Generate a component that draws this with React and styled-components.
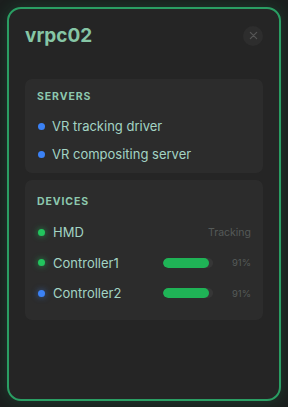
import React from 'react';
import styled, { createGlobalStyle } from 'styled-components';

const GlobalStyle = createGlobalStyle`
  html, body {
    margin: 0;
    padding: 0;
    background: #1b1f1e;
  }

  body {
    font-family: Inter, "Noto Sans", sans-serif;
    -webkit-font-smoothing: antialiased;
  }
`;

const Page = styled.div`
  padding: 7px;
`;

const Panel = styled.div`
  box-sizing: border-box;
  height: 394px;
  padding: 16px;
  background: #252525;
  border: 2px solid #2a9e63;
  border-radius: 14px;
  box-shadow: 0 0 14px rgba(42, 158, 99, 0.22);
  display: flex;
  flex-direction: column;
`;

const Header = styled.div`
  display: flex;
  align-items: center;
  justify-content: space-between;
  height: 21px;
  margin-bottom: 33px;
`;

const Title = styled.h1`
  margin: 0;
  font-size: 19px;
  font-weight: 700;
  color: #86c6a5;
  line-height: 1;
`;

const CloseButton = styled.button`
  width: 20px;
  height: 20px;
  padding: 0;
  border: none;
  border-radius: 50%;
  background: #2d2d2d;
  color: #555;
  display: flex;
  align-items: center;
  justify-content: center;
  cursor: pointer;
`;

const Card = styled.section`
  background: #2c2c2c;
  border-radius: 7px;
  padding: ${p => (p.$roomy ? '14.5px 12px 11.5px' : '10.5px 12px 5px')};
  & + & {
    margin-top: 7px;
  }
`;

const Heading = styled.h2`
  margin: 0 0 9.5px;
  font-size: 10.5px;
  font-weight: 700;
  letter-spacing: 0.9px;
  text-transform: uppercase;
  color: #8cc8ae;
  line-height: 13px;
`;

const Row = styled.div`
  display: flex;
  align-items: center;
  height: ${p => p.$h}px;
`;

const Dot = styled.span`
  width: 7px;
  height: 7px;
  border-radius: 50%;
  flex-shrink: 0;
  margin-left: 1px;
  margin-right: ${p => p.$gap}px;
  background: ${p => (p.$color === 'green' ? '#22c55e' : '#3b82f6')};
  box-shadow: ${p =>
    p.$glow
      ? p.$color === 'green'
        ? '0 0 6px rgba(34, 197, 94, 0.7)'
        : '0 0 6px rgba(59, 130, 246, 0.6)'
      : 'none'};
`;

const Name = styled.span`
  flex: 1;
  font-size: 13px;
  color: #a3d4c4;
`;

const Status = styled.span`
  font-size: 10.5px;
  color: #555a58;
`;

const Track = styled.div`
  width: 50px;
  height: 10px;
  border-radius: 5px;
  background: #363636;
  overflow: hidden;
`;

const Fill = styled.div`
  height: 100%;
  border-radius: 5px;
  background: #1fb356;
`;

const Pct = styled.span`
  width: 38px;
  text-align: right;
  font-size: 9.5px;
  color: #555a58;
`;

const servers = ['VR tracking driver', 'VR compositing server'];

const devices = [
  { name: 'HMD', color: 'green', status: 'Tracking' },
  { name: 'Controller1', color: 'green', battery: 91 },
  { name: 'Controller2', color: 'blue', battery: 91 },
];

const App = () => {
  return (
    <Page>
      <GlobalStyle />
      <Panel>
        <Header>
          <Title>vrpc02</Title>
          <CloseButton aria-label="Close">
            <svg width="9" height="9" viewBox="0 0 10 10">
              <path d="M1.5 1.5 8.5 8.5M8.5 1.5 1.5 8.5" stroke="currentColor" strokeWidth="1.4" strokeLinecap="round" />
            </svg>
          </CloseButton>
        </Header>

        <Card>
          <Heading>Servers</Heading>
          {servers.map(s => (
            <Row key={s} $h={28}>
              <Dot $color="blue" $gap={7} />
              <Name>{s}</Name>
            </Row>
          ))}
        </Card>

        <Card $roomy>
          <Heading>Devices</Heading>
          {devices.map(d => (
            <Row key={d.name} $h={30.5}>
              <Dot $color={d.color} $gap={8} $glow />
              <Name>{d.name}</Name>
              {d.status && <Status>{d.status}</Status>}
              {d.battery != null && (
                <>
                  <Track>
                    <Fill style={{ width: `${d.battery}%` }} />
                  </Track>
                  <Pct>{d.battery}%</Pct>
                </>
              )}
            </Row>
          ))}
        </Card>
      </Panel>
    </Page>
  );
};

export default App;
